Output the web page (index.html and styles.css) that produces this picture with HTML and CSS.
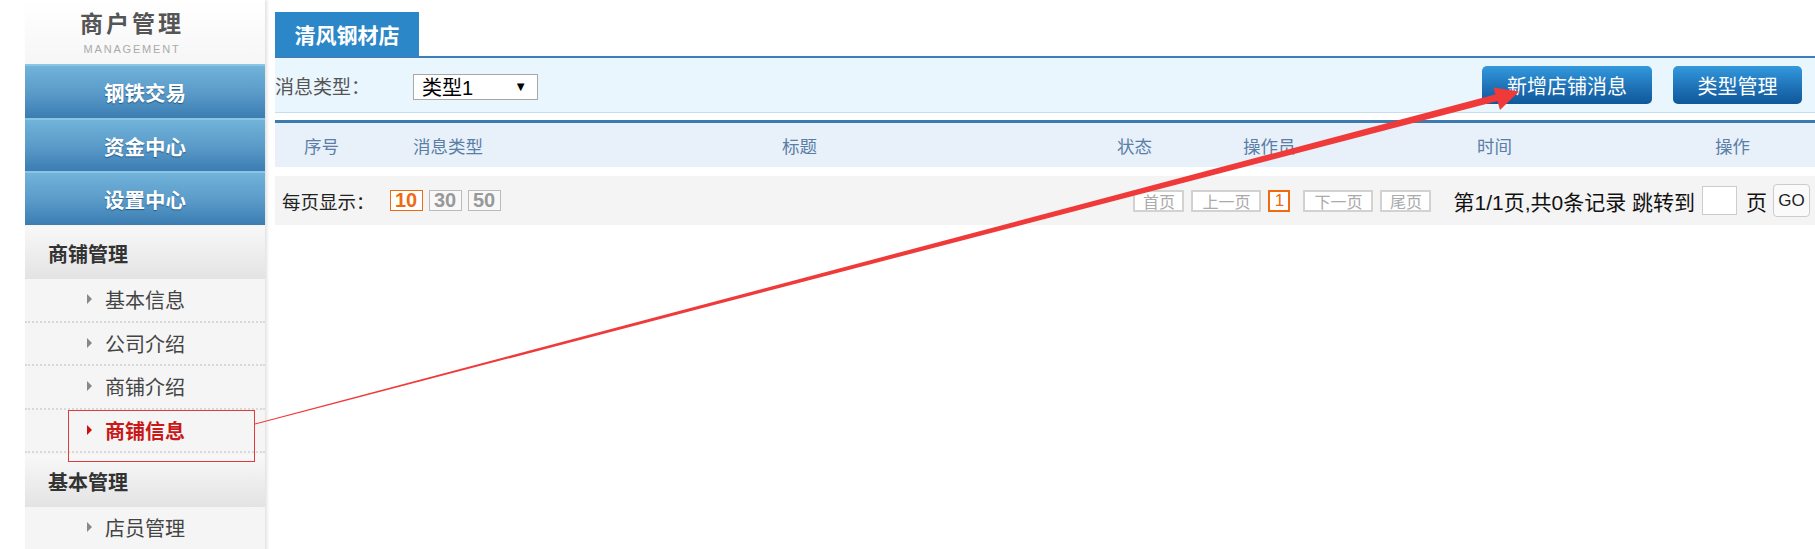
FILE: index.html
```html
<!DOCTYPE html>
<html lang="zh-CN">
<head>
  <meta charset="UTF-8">
  <title>商户管理 | 商铺信息</title>
  <link rel="stylesheet" href="styles.css">
</head>
<body>

<div class="page">
  <div class="sidebar">
    <div class="brand">
      <div class="brand-title">商户管理</div>
      <div class="brand-sub">MANAGEMENT</div>
    </div>
    <div class="nav-main">钢铁交易</div>
    <div class="nav-main">资金中心</div>
    <div class="nav-main">设置中心</div>

    <div class="group-title">商铺管理</div>
    <div class="sub-item">基本信息</div>
    <div class="sub-item">公司介绍</div>
    <div class="sub-item">商铺介绍</div>
    <div class="sub-item active">商铺信息</div>

    <div class="group-title">基本管理</div>
    <div class="sub-item">店员管理</div>
  </div>

  <div class="main">
    <div class="tabbar">
      <span class="tab">清风钢材店</span>
    </div>

    <div class="filter">
      <span class="filter-label">消息类型：</span>
      <span class="select">类型1<span class="select-arrow">▼</span></span>
      <span class="spacer"></span>
      <button class="btn">新增店铺消息</button>
      <button class="btn btn-small">类型管理</button>
    </div>

    <div class="table-head">
      <span>序号</span>
      <span>消息类型</span>
      <span>标题</span>
      <span>状态</span>
      <span>操作员</span>
      <span>时间</span>
      <span>操作</span>
    </div>

    <div class="pager">
      <span class="per-page">每页显示：</span>
      <span class="size current">10</span>
      <span class="size">30</span>
      <span class="size">50</span>
      <span class="spacer"></span>
      <span class="page-btn">首页</span>
      <span class="page-btn wide">上一页</span>
      <span class="page-num">1</span>
      <span class="page-btn wide">下一页</span>
      <span class="page-btn">尾页</span>
      <span class="page-info">第1/1页,共0条记录 跳转到</span>
      <span class="jump-input"></span>
      <span class="page-info">页</span>
      <span class="go">GO</span>
    </div>
  </div>
</div>

<!-- screenshot annotation -->
<svg class="annotation" width="1815" height="549" viewBox="0 0 1815 549">
  <rect x="68.5" y="410.5" width="186" height="51" fill="none" stroke="#e03a3a" stroke-width="1"/>
  <polygon points="255,423.5 255,424.5 1497.7,101 1495.9,94.2" fill="#f03a3a"/>
  <polygon points="1519,91.5 1493.5,87.5 1500,110" fill="#f03a3a"/>
</svg>

</body>
</html>
```

FILE: styles.css
```css
:root {
  --blue-dark: #3a80bb;
  --blue-tab: #2b87c8;
  --blue-text: #5a7ea6;
  --grey-bg: #f4f4f4;
  --orange: #f06a10;
}
html, body {
  margin: 0;
  padding: 0;
  overflow: hidden;
}
body {
  font-family: "Liberation Sans", "Noto Sans CJK SC", sans-serif;
  color: #333;
  background: #fff;
  position: relative;
  width: 1815px;
  height: 549px;
}
.page {
  display: flex;
  padding-left: 25px;
  align-items: flex-start;
}

/* sidebar */
.sidebar {
  width: 240px;
  flex: none;
  background: #f5f5f5;
  box-shadow: 2px 0 3px rgba(0, 0, 0, 0.12);
}
.brand {
  height: 64px;
  background: linear-gradient(#ffffff, #f6f6f6);
  display: flex;
  flex-direction: column;
  align-items: center;
  padding-right: 26px;
  padding-top: 9px;
  box-sizing: border-box;
}
.brand-title {
  font-size: 23px;
  font-weight: bold;
  color: #555;
  letter-spacing: 3px;
  line-height: 30px;
}
.brand-sub {
  font-size: 11px;
  color: #aaa;
  letter-spacing: 1.8px;
  line-height: 14px;
  margin-top: 3px;
}
.nav-main {
  height: 53.7px;
  box-sizing: border-box;
  border-top: 2px solid #8cc4e4;
  background: linear-gradient(#72b3da, #5899c8 55%, #3b7db2);
  color: #fff;
  font-size: 20.5px;
  font-weight: bold;
  text-shadow: 0 1px 1px rgba(0, 50, 100, 0.6);
  display: flex;
  align-items: center;
  justify-content: center;
}
.group-title {
  height: 52px;
  margin-top: 2px;
  box-sizing: border-box;
  padding-left: 23px;
  background: linear-gradient(#f8f8f8, #e3e3e3);
  font-size: 20px;
  font-weight: bold;
  color: #333;
  display: flex;
  align-items: center;
}
.sub-item {
  height: 43.5px;
  box-sizing: border-box;
  border-bottom: 2px dotted #d8d8d8;
  padding-left: 80px;
  font-size: 20px;
  color: #444;
  display: flex;
  align-items: center;
  position: relative;
}
.sub-item::before {
  content: "";
  position: absolute;
  left: 62px;
  top: 15px;
  border-left: 5px solid #888;
  border-top: 5px solid transparent;
  border-bottom: 5px solid transparent;
}
.sub-item.active {
  color: #c81818;
  font-weight: bold;
}
.sub-item.active::before {
  border-left-color: #d01010;
}

/* main */
.main {
  flex: 1;
  padding-left: 10px;
  padding-top: 12px;
}
.tabbar {
  display: flex;
  border-bottom: 2px solid var(--blue-dark);
}
.tab {
  width: 144px;
  height: 44px;
  background: var(--blue-tab);
  color: #fff;
  font-size: 21px;
  font-weight: bold;
  display: flex;
  align-items: center;
  justify-content: center;
}
.filter {
  height: 55px;
  box-sizing: border-box;
  background: #eaf6fd;
  border-bottom: 1px solid #c8dde9;
  display: flex;
  align-items: center;
}
.filter-label {
  font-size: 19px;
  color: #555;
  width: 138px;
}
.select {
  width: 125px;
  height: 26px;
  box-sizing: border-box;
  border: 1px solid #a8a8a8;
  background: #fff;
  font-size: 20px;
  color: #000;
  display: flex;
  align-items: center;
  padding-left: 8px;
  margin-top: 3px;
}
.select-arrow {
  margin-left: auto;
  margin-right: 10px;
  font-size: 13px;
}
.spacer {
  flex: 1;
}
.btn {
  height: 38px;
  width: 170px;
  border: none;
  border-radius: 5px;
  background: linear-gradient(#3399dd, #1d6fb4 60%, #11579a);
  color: #fff;
  font-family: inherit;
  font-size: 20px;
  margin-right: 21px;
  padding: 0;
}
.btn-small {
  width: 129px;
  margin-right: 13px;
}
.table-head {
  margin-top: 7px;
  height: 47px;
  box-sizing: border-box;
  border-top: 3px solid #3d7ab0;
  background: #e8f1fa;
  display: grid;
  grid-template-columns: 109px 369px 335px 126px 234px 238px auto;
  padding-left: 29px;
  align-items: center;
  font-size: 17.5px;
  color: var(--blue-text);
}
.pager {
  margin-top: 9px;
  height: 49px;
  background: var(--grey-bg);
  display: flex;
  align-items: center;
  padding-left: 7px;
  padding-right: 5px;
}
.per-page {
  font-size: 18.5px;
  color: #222;
  margin-right: 15px;
}
.size {
  width: 33px;
  height: 21px;
  box-sizing: border-box;
  border: 1px solid #bbb;
  background: #f8f8f8;
  color: #999;
  font-size: 20px;
  font-weight: bold;
  display: flex;
  align-items: center;
  justify-content: center;
  margin-right: 6px;
}
.size.current {
  border-color: var(--orange);
  color: var(--orange);
  background: #fff;
}
.page-btn {
  width: 51px;
  height: 22px;
  box-sizing: border-box;
  border: 2px solid #d2d2d2;
  background: #fff;
  color: #aaa;
  font-family: "Liberation Serif", "Noto Sans CJK SC", serif;
  font-size: 16px;
  display: flex;
  align-items: center;
  justify-content: center;
  margin-right: 7px;
}
.page-btn.wide {
  width: 70px;
}
.page-num {
  width: 22px;
  height: 22px;
  box-sizing: border-box;
  border: 2px solid var(--orange);
  color: var(--orange);
  background: #fff;
  font-size: 17px;
  display: flex;
  align-items: center;
  justify-content: center;
  margin-right: 13px;
}
.page-info {
  font-size: 21px;
  color: #111;
  margin-left: 15px;
}
.jump-input {
  width: 35px;
  height: 29px;
  box-sizing: border-box;
  border: 1px solid #ccc;
  background: #fff;
  margin-left: 7px;
  margin-right: -6px;
}
.go {
  width: 37px;
  height: 33px;
  box-sizing: border-box;
  border: 1px solid #ccc;
  border-radius: 4px;
  background: #fafafa;
  font-size: 17px;
  color: #222;
  display: flex;
  align-items: center;
  justify-content: center;
  margin-left: 6px;
}

.annotation {
  position: absolute;
  top: 0;
  left: 0;
  pointer-events: none;
}
```
